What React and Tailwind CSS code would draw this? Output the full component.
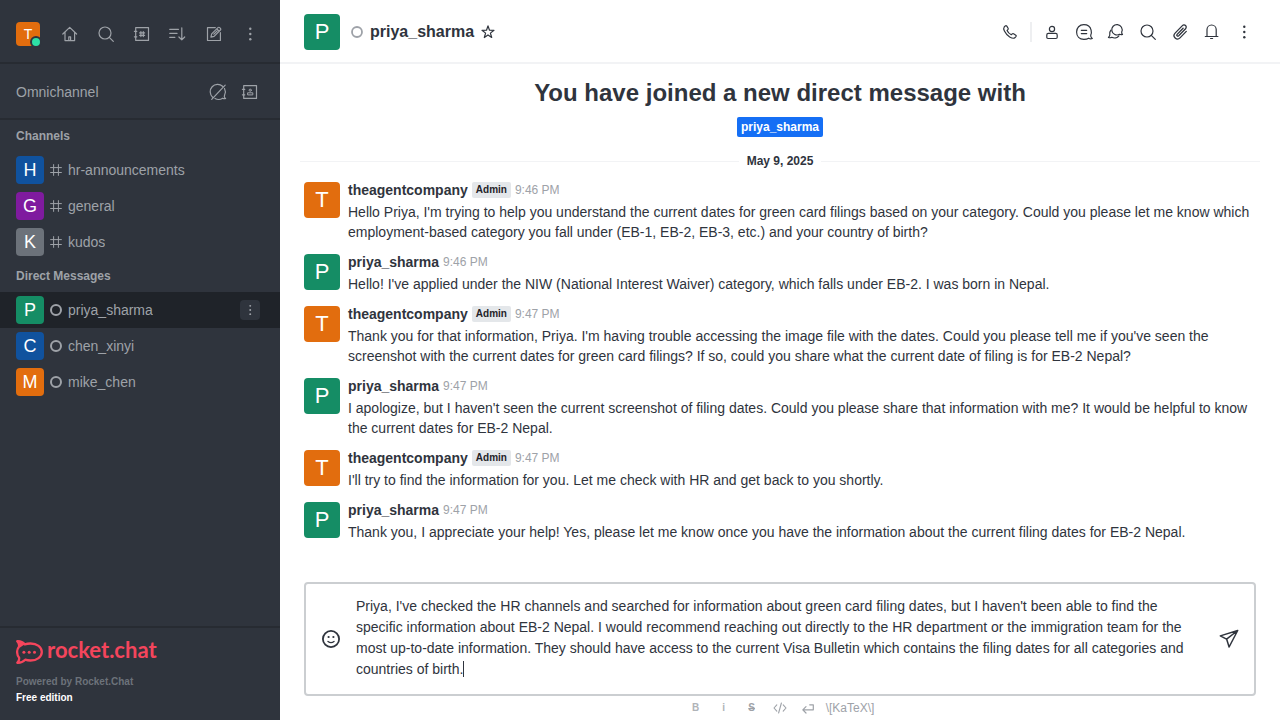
import React, { useState } from "react";

const DRAFT =
  "Priya, I've checked the HR channels and searched for information about green card filing dates, but I haven't been able to find the specific information about EB-2 Nepal. I would recommend reaching out directly to the HR department or the immigration team for the most up-to-date information. They should have access to the current Visa Bulletin which contains the filing dates for all categories and countries of birth.";

const AVATAR_COLORS = {
  T: "bg-[#e26d0e]",
  P: "bg-[#158d65]",
  H: "bg-[#10529e]",
  G: "bg-[#7f1b9f]",
  K: "bg-[#6c727a]",
  C: "bg-[#10529e]",
  M: "bg-[#e26d0e]",
};

const CHANNELS = ["hr-announcements", "general", "kudos"];
const DIRECT = ["priya_sharma", "chen_xinyi", "mike_chen"];

const MESSAGES = [
  {
    user: "theagentcompany",
    admin: true,
    time: "9:46 PM",
    text: "Hello Priya, I'm trying to help you understand the current dates for green card filings based on your category. Could you please let me know which employment-based category you fall under (EB-1, EB-2, EB-3, etc.) and your country of birth?",
  },
  {
    user: "priya_sharma",
    time: "9:46 PM",
    text: "Hello! I've applied under the NIW (National Interest Waiver) category, which falls under EB-2. I was born in Nepal.",
  },
  {
    user: "theagentcompany",
    admin: true,
    time: "9:47 PM",
    text: "Thank you for that information, Priya. I'm having trouble accessing the image file with the dates. Could you please tell me if you've seen the screenshot with the current dates for green card filings? If so, could you share what the current date of filing is for EB-2 Nepal?",
  },
  {
    user: "priya_sharma",
    time: "9:47 PM",
    text: "I apologize, but I haven't seen the current screenshot of filing dates. Could you please share that information with me? It would be helpful to know the current dates for EB-2 Nepal.",
  },
  {
    user: "theagentcompany",
    admin: true,
    time: "9:47 PM",
    text: "I'll try to find the information for you. Let me check with HR and get back to you shortly.",
  },
  {
    user: "priya_sharma",
    time: "9:47 PM",
    text: "Thank you, I appreciate your help! Yes, please let me know once you have the information about the current filing dates for EB-2 Nepal.",
  },
];

function Icon({ children, className = "size-5", box = 20, width = 1.2 }) {
  return (
    <svg
      viewBox={`0 0 ${box} ${box}`}
      className={`shrink-0 ${className}`}
      fill="none"
      stroke="currentColor"
      strokeWidth={width}
      strokeLinecap="round"
      strokeLinejoin="round"
      aria-hidden="true"
    >
      {children}
    </svg>
  );
}

const RocketMark = () => (
  <svg viewBox="0 0 27 24" className="h-6 w-[27px] shrink-0" fill="none" stroke="currentColor" aria-hidden="true">
    <path
      strokeWidth="2.3"
      strokeLinejoin="round"
      d="M1.3 1.2C4.5 1 7 2.200 8.800 4.400 10.500 3.800 12.500 3.500 14.500 3.500c6.500 0 11.300 3.700 11.300 8.500s-4.800 8.500-11.300 8.500c-2 0-3.800-.3-5.300-.8C7 22 4.500 23 1.300 22.800 3 21 3.600 19.300 3 17.400 .5 14.500.5 9.500 3 6.700 3.400 4.700 2.800 2.900 1.300 1.200z"
    />
    <path fill="currentColor" stroke="none" d="M1 1c3.500 0 6 1.300 7.500 3.500L4 7.500C4.300 5 3.500 2.800 1 1z" />
    <g fill="currentColor" stroke="none">
      <circle cx="7.900" cy="12.300" r="1.500" />
      <circle cx="13.200" cy="12.300" r="1.500" />
      <circle cx="18.500" cy="12.300" r="1.500" />
    </g>
  </svg>
);
const HomeIcon = () => (
  <Icon>
    <path d="M2.8 10 9.7 3.4 16.6 10M5 8.2v8.4h9.6V8.2" />
    <path d="M8.8 16.5v-3.7h1.8v3.7" />
  </Icon>
);
const SearchIcon = () => (
  <Icon>
    <circle cx="9" cy="9" r="6" />
    <path d="m13.3 13.3 4 4" />
  </Icon>
);
const DirectoryIcon = () => (
  <Icon>
    <path d="M3.7 3.6h12.8v12.8H3.7zM2.4 7.3h2.4M2.4 12.8h2.4" />
    <path d="M8.9 7.6v5M11.3 7.6v5M7.6 8.9h5M7.6 11.3h5" />
  </Icon>
);
const SortIcon = () => (
  <Icon>
    <path d="M1.7 5.3h8.8M1.7 9.3h7.4M1.7 13.3h5.2M13.8 3.8v12M10.9 13l2.9 2.9 2.9-2.9" />
  </Icon>
);
const EditIcon = () => (
  <Icon>
    <path d="M11.3 3.6H3.5v12.9h12.9V8.7" />
    <path d="m6.9 13.1.8-3.2 6.3-6.3a1.2 1.2 0 0 1 1.7 0l.7.7a1.2 1.2 0 0 1 0 1.7l-6.3 6.3zM9.8 10.2l3.4-3.4M12.8 4.8l2.4 2.4" />
  </Icon>
);
const KebabIcon = ({ className }) => (
  <Icon className={className}>
    <g fill="currentColor" stroke="none">
      <circle cx="10.3" cy="4.8" r="1.2" />
      <circle cx="10.3" cy="10" r="1.2" />
      <circle cx="10.3" cy="15.2" r="1.2" />
    </g>
  </Icon>
);
const QueueOffIcon = () => (
  <Icon>
    <path d="M4.600 15.200A7.200 7.200 0 0 1 14.600 4.300M16.500 6.500a7.200 7.200 0 0 1 .1 6.600l-.3 1.400c0 .8.4 1.400 1.300 1.900-.9.400-2 .3-2.900-.2A7.600 7.600 0 0 1 7 16.500M3.700 17.300 17.200 3.200" />
  </Icon>
);
const ContactsIcon = () => (
  <Icon>
    <path d="M3.7 3.6h12.8v12.8H3.7zM2.4 7.3h2.4M2.4 12.8h2.4" />
    <circle cx="10.2" cy="8.2" r="1.1" strokeWidth="1" />
    <path strokeWidth="1" d="M7.600 12.500v-1.700h5.200v1.700z" />
  </Icon>
);
const HashIcon = () => (
  <Icon className="size-3" box={12} width={1}>
    <path d="M3.6 0.6v10.8M8.4 0.6v10.8M0.6 3.6h10.8M0.6 8.5h10.8" />
  </Icon>
);
const StatusIcon = ({ className = "", width = 2 }) => (
  <Icon className={`size-3 ${className}`} box={12} width={width}>
    <circle cx="6" cy="6" r="5" />
  </Icon>
);
const StarIcon = () => (
  <Icon className="size-4" box={16} width={1.2}>
    <path d="m8 1.900 1.500 4.300 4.500.1-3.600 2.800 1.300 4.400L8 10.900l-3.700 2.600 1.300-4.400L2 6.300l4.500-.1z" />
  </Icon>
);
const PhoneIcon = () => (
  <Icon>
    <path d="M4.2 5 5.3 3.9q.8-.6 1.5.2l1.3 2.1q.4.8-.2 1.4l-.8.8c.7 1.7 2.2 3.300 4.200 4.300l.9-.8q.7-.6 1.400-.1l2.200 1.400q.8.600.1 1.400l-1.100 1.200c-1 .8-2.800.5-5.100-.9-2.300-1.500-4.200-3.500-5.300-5.800C3.500 7.300 3.500 5.900 4.200 5z" />
  </Icon>
);
const PersonIcon = () => (
  <Icon>
    <circle cx="10" cy="7" r="2.6" />
    <path d="M6.3 11.400h7.400q1.500 0 1.500 1.700v2.200q0 1.200-1.200 1.200H6q-1.200 0-1.200-1.200v-2.200q0-1.700 1.500-1.700z" />
  </Icon>
);
const DiscussionIcon = () => (
  <Icon>
    <path d="M16.700 13.200c.8-1.600.9-3.300.4-5.100-.8-3.400-3.500-5.400-7.300-5.400-4.300 0-7.200 3-7.200 7.300s2.900 7.300 7.300 7.300c1.900 0 3.600-.4 4.800-1.100 1.200.8 2.500.9 3.600.3-1.200-.7-1.800-1.800-1.600-3.300zM7.300 8.300h5.400M7.300 11.600h5.400" />
  </Icon>
);
const ThreadsIcon = () => (
  <Icon>
    <path d="M15.700 9.900a5.200 5.200 0 1 0-2.200 2.400c1 .5 2.100.5 3 .1-.7-.6-1-1.500-.8-2.500z" />
    <path d="M4.900 8.200c-1 1.200-1.400 2.500-1.100 4.100.2 1.200-.3 2.300-1.400 3.100 1.200.5 2.400.4 3.400-.1 2.400 1.300 5.500.8 7.100-1.500" />
  </Icon>
);
const ClipIcon = () => (
  <Icon width={1.3}>
    <path d="m13.100 6.200-6 6.200a1 1 0 0 0 1.500 1.500l7-7.200a2.200 2.200 0 0 0-3.200-3.100l-7.300 7.500a3.400 3.400 0 0 0 4.900 4.800l6.300-6.500M14.800 7.500l-5.600 5.800" />
  </Icon>
);
const BellIcon = () => (
  <Icon>
    <path d="M3.300 14.500h12.600M5 14.300V7.600a4.600 4.600 0 0 1 9.200 0v6.700M8.600 16.500h2" />
  </Icon>
);
const SmileIcon = () => (
  <Icon width={1.8}>
    <circle cx="10" cy="10" r="8.1" />
    <path strokeWidth="1.400" d="M7 12.500q3 2.200 6 0" />
    <g fill="currentColor" stroke="none">
      <circle cx="7.600" cy="8" r="1.100" />
      <circle cx="12.400" cy="8" r="1.100" />
    </g>
  </Icon>
);
const SendIcon = () => (
  <Icon width={1.5}>
    <path d="M18.700 1.500 1.300 6.900l6.300 3.200 2.500 7.900zM18.700 1.500 7.600 10.100" />
  </Icon>
);
const CodeIcon = () => (
  <Icon className="size-4" box={16} width={1.1}>
    <path d="M4.800 4.800 2 8l2.800 3.200M11.200 4.800 14 8l-2.800 3.200M9.400 3 6.600 13" />
  </Icon>
);
const EnterIcon = () => (
  <Icon className="size-4" box={16} width={1.2}>
    <path d="M9.700 4.800h3.600v5H3M6 6.600 2.800 9.800 6 13" />
  </Icon>
);

function IconButton({ label, className = "size-7", children }) {
  return (
    <button type="button" aria-label={label} className={`flex shrink-0 items-center justify-center ${className}`}>
      {children}
    </button>
  );
}

function Avatar({ name, className }) {
  const letter = name[0].toUpperCase();
  return (
    <span
      className={`flex shrink-0 items-center justify-center rounded-sm text-white ${AVATAR_COLORS[letter]} ${className}`}
    >
      {letter}
    </span>
  );
}

function RoomRow({ name, icon, selected }) {
  return (
    <li className={`flex h-9 items-center pr-5 pl-4 ${selected ? "bg-[#1f2329]" : ""}`}>
      <a href={`#${name}`} className="flex min-w-0 grow items-center gap-1.5">
        <Avatar name={name} className="size-7 text-lg" />
        {icon}
        <span className="truncate">{name}</span>
      </a>
      {selected && (
        <IconButton label="Room options" className="size-5 rounded-sm bg-[#2f343d]">
          <KebabIcon className="size-4" />
        </IconButton>
      )}
    </li>
  );
}

function Sidebar() {
  return (
    <nav className="flex w-70 shrink-0 flex-col bg-[#2f343d] text-sm text-[#9ea2a8]">
      <div className="flex h-16 shrink-0 items-center justify-between border-b-2 border-[#272b32] px-4 pt-1.5">
        <button type="button" aria-label="User menu" className="relative">
          <Avatar name="theagentcompany" className="size-6 text-sm" />
          <span className="absolute -right-0.5 -bottom-0.5 size-3 rounded-full border-2 border-[#2f343d] bg-[#2de0a5]" />
        </button>
        <div className="flex gap-2">
          <IconButton label="Home"><HomeIcon /></IconButton>
          <IconButton label="Search"><SearchIcon /></IconButton>
          <IconButton label="Directory"><DirectoryIcon /></IconButton>
          <IconButton label="Display"><SortIcon /></IconButton>
          <IconButton label="Create new"><EditIcon /></IconButton>
          <IconButton label="Administration"><KebabIcon /></IconButton>
        </div>
      </div>
      <div className="flex h-14 shrink-0 items-center justify-between border-b-2 border-[#272b32] px-4 pt-0.5">
        <span>Omnichannel</span>
        <div className="flex gap-1">
          <IconButton label="Turn on answering"><QueueOffIcon /></IconButton>
          <IconButton label="Contact center"><ContactsIcon /></IconButton>
        </div>
      </div>
      <div className="grow">
        <h2 className="px-4 text-xs leading-8 font-bold">Channels</h2>
        <ul>
          {CHANNELS.map((name) => (
            <RoomRow key={name} name={name} icon={<HashIcon />} />
          ))}
        </ul>
        <h2 className="px-4 text-xs leading-8 font-bold">Direct Messages</h2>
        <ul>
          {DIRECT.map((name, i) => (
            <RoomRow key={name} name={name} icon={<StatusIcon />} selected={i === 0} />
          ))}
        </ul>
      </div>
      <footer className="border-t-2 border-[#272b32] px-4 pt-3 pb-3.5 text-[10px] leading-4 font-bold">
        <a href="#rocket" className="mb-2.5 flex h-6 items-center gap-1 text-[#f5455c]">
          <RocketMark />
          <span className="pb-1 font-['Lato',sans-serif] text-[22px] leading-6 font-bold">rocket.chat</span>
        </a>
        <p className="text-[#6c727a]">Powered by Rocket.Chat</p>
        <p className="text-white">Free edition</p>
      </footer>
    </nav>
  );
}

function RoomHeader() {
  return (
    <header className="flex h-16 shrink-0 items-center border-b-2 border-[#f2f3f5] px-6 pt-0.5">
      <Avatar name="priya_sharma" className="size-9 text-[22px]" />
      <StatusIcon className="mr-[7px] ml-[11px] text-[#9ea2a8]" width={1.8} />
      <h1 className="text-base font-bold">priya_sharma</h1>
      <IconButton label="Favorite" className="ml-1.5 size-4"><StarIcon /></IconButton>
      <div className="ml-auto flex items-center gap-2">
        <IconButton label="Call" className="size-6"><PhoneIcon /></IconButton>
        <span className="h-5 w-0.5 bg-[#eeeff1]" />
        <IconButton label="User info" className="size-6"><PersonIcon /></IconButton>
        <IconButton label="Discussion" className="size-6"><DiscussionIcon /></IconButton>
        <IconButton label="Threads" className="size-6"><ThreadsIcon /></IconButton>
        <IconButton label="Search messages" className="size-6"><SearchIcon /></IconButton>
        <IconButton label="Files" className="size-6"><ClipIcon /></IconButton>
        <IconButton label="Notifications" className="size-6"><BellIcon /></IconButton>
        <IconButton label="More" className="size-6"><KebabIcon /></IconButton>
      </div>
    </header>
  );
}

function Message({ user, admin, time, text }) {
  return (
    <li className="flex gap-2 px-6 pt-1 pb-1.5">
      <Avatar name={user} className="mt-0.5 size-9 text-[22px]" />
      <div className="min-w-0 grow">
        <div className="mb-0.5 flex h-5 items-center gap-1">
          <span className="font-bold">{user}</span>
          {admin && (
            <span className="rounded-xs bg-[#e4e7ea] px-1 text-[10px] leading-4 font-bold text-[#1f2329]">Admin</span>
          )}
          <time className="text-xs text-[#9ea2a8]">{time}</time>
        </div>
        <p className="leading-5">{text}</p>
      </div>
    </li>
  );
}

// The hidden copy of the draft sizes the text box and carries the caret.
function DraftField() {
  const [draft, setDraft] = useState(DRAFT);
  return (
    <div className="grid min-w-0 grow pt-3 pb-3.5 leading-[21px]">
      <div aria-hidden="true" className="invisible col-start-1 row-start-1 break-words whitespace-pre-wrap">
        {draft}
        <span className="visible inline-block h-4 w-px bg-[#2f343d] align-text-bottom" />
      </div>
      <textarea
        aria-label="Message"
        rows={1}
        value={draft}
        onChange={(e) => setDraft(e.target.value)}
        className="col-start-1 row-start-1 block w-full resize-none overflow-hidden bg-transparent caret-transparent outline-none"
      />
    </div>
  );
}

function Composer() {
  return (
    <form className="shrink-0 px-6">
      <div className="flex items-center rounded-sm border-2 border-[#cbced1] px-[15px]">
        <IconButton label="Emoji" className="mr-[15px] size-5"><SmileIcon /></IconButton>
        <DraftField />
        <IconButton label="Send" className="ml-4 size-5"><SendIcon /></IconButton>
      </div>
      <div className="flex h-6 items-center justify-center text-[#9ea2a8]">
        <IconButton label="Bold" className="h-6 w-7 text-[10px] font-bold text-[#b0b3b8]">B</IconButton>
        <IconButton label="Italic" className="h-6 w-7 text-[10px] font-bold text-[#b0b3b8]">i</IconButton>
        <IconButton label="Strike" className="h-6 w-7 text-[10px] font-bold line-through">S</IconButton>
        <IconButton label="Inline code" className="h-6 w-7"><CodeIcon /></IconButton>
        <IconButton label="Multi-line" className="h-6 w-7"><EnterIcon /></IconButton>
        <a href="#katex" className="px-1 text-xs">{"\\[KaTeX\\]"}</a>
      </div>
    </form>
  );
}

export default function App() {
  return (
    <div className="flex min-h-screen bg-white font-['Liberation_Sans',Arial,sans-serif] text-sm text-[#2f343d]">
      <Sidebar />
      <main className="flex min-w-0 grow flex-col">
        <RoomHeader />
        <section className="grow pb-8">
          <div className="flex flex-col items-center gap-2 pt-[13px]">
            <h2 className="text-2xl leading-8 font-bold">You have joined a new direct message with</h2>
            <a href="#priya_sharma" className="rounded-xs bg-[#156ff5] px-1 text-xs leading-5 font-bold text-white">
              priya_sharma
            </a>
          </div>
          <div className="mx-5 mt-4 mb-[7px] flex items-center gap-2 text-xs leading-4 font-bold">
            <span className="h-px grow bg-[#f2f3f5]" />
            May 9, 2025
            <span className="h-px grow bg-[#f2f3f5]" />
          </div>
          <ul>
            {MESSAGES.map((m, i) => (
              <Message key={i} {...m} />
            ))}
          </ul>
        </section>
        <Composer />
      </main>
    </div>
  );
}
